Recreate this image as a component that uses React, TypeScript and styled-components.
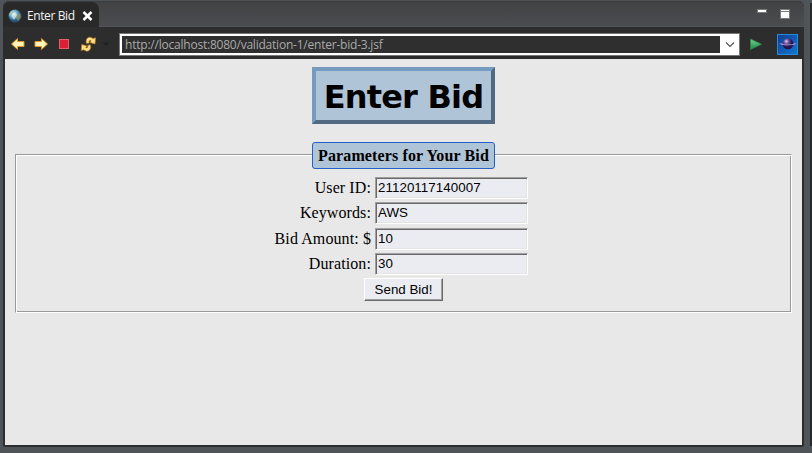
import React from "react";
import styled, { createGlobalStyle } from "styled-components";

const GlobalStyle = createGlobalStyle`
  * { box-sizing: border-box; }
  body { margin: 0; background: #4e5356; overflow: hidden; }
`;

const Desktop = styled.div`
  display: flex;
  justify-content: space-between;
  width: 812px;
  height: 453px;
  background: #4e5457;
`;

const Window = styled.div`
  display: flex;
  flex-direction: column;
  width: 801px;
  height: 446px;
  margin: 1px 0 0 3px;
  background: #2d2d2d;
  border-radius: 6px 6px 2px 2px;
`;

const Neighbour = styled.div`
  width: 2px;
  height: 443px;
  margin-top: 3px;
  background: #292929;
`;

const TabBar = styled.div`
  display: flex;
  justify-content: space-between;
  height: 26px;
  flex: none;
  background: linear-gradient(#424345, #4b4c4f);
  border-top: 1px solid #393b3c;
  border-bottom: 1px solid #515356;
  border-radius: 6px 6px 0 0;
`;

const Tab = styled.div`
  display: flex;
  align-items: center;
  width: 96px;
  height: 26px;
  padding: 1px 0 0 5px;
  background: #292929;
  border-radius: 6px 7px 0 0;
  color: #f4f4f4;
  font: 12px "Open Sans", sans-serif;
`;

const TabTitle = styled.span`
  width: 48px;
  margin: 0 7px 0 5px;
  line-height: 16px;
  letter-spacing: -0.4px;
  white-space: nowrap;
`;

const WindowButtons = styled.div`
  display: flex;
  gap: 13px;
  padding: 7px 14px 0 0;
`;

const Toolbar = styled.div`
  display: flex;
  align-items: center;
  height: 32px;
  flex: none;
  padding: 2px 6px 0 7px;
  background: #2d2d2d;
`;

const ToolIcons = styled.div`
  display: flex;
  align-items: center;
  width: 109px;
`;

const AddressBox = styled.div`
  display: flex;
  flex: none;
  width: 621px;
  height: 23px;
  padding: 2px;
  border: 1px solid #777;
  background: #fff;
`;

const Address = styled.div`
  width: 598px;
  padding-left: 3px;
  background: #2f2f2f;
  color: #aaa;
  font: 12px/17px "Open Sans", sans-serif;
  letter-spacing: -0.22px;
  white-space: nowrap;
`;

const DropArrow = styled.svg`
  margin: 5px 0 0 5px;
`;

const Page = styled.main`
  display: flex;
  flex-direction: column;
  align-items: center;
  height: 386px;
  margin: 0 2px;
  padding: 8px 10px 0;
  background: #e8e8e8;
  color: #000;
  font: 16px "Liberation Serif", serif;
`;

const Heading = styled.h1`
  width: 183px;
  height: 57px;
  margin: 0;
  border: 4px solid;
  border-color: #759bbe #516982 #516982 #759bbe;
  background: #b0c4d8;
  font: bold 32px/53px "DejaVu Sans", sans-serif;
  letter-spacing: -0.8px;
  text-align: center;
  white-space: nowrap;
`;

const Group = styled.section`
  display: flex;
  flex-direction: column;
  align-items: center;
  width: 777px;
  height: 159px;
  margin-top: 30px;
  border: 1px solid;
  border-color: #999 #fff #fff #999;
  box-shadow: inset 1px 1px #fff, inset -1px -1px #999;
`;

const Legend = styled.h2`
  width: 183px;
  height: 27px;
  margin: -13px 0 8px;
  border: 1px solid #2560c8;
  border-radius: 3px;
  background: #b0c4d8;
  font: bold 16px/26px "Liberation Serif", serif;
  letter-spacing: 0.12px;
  text-align: center;
  white-space: nowrap;
`;

const Form = styled.form`
  display: grid;
  grid-template-columns: 97px 153px;
  grid-auto-rows: 22px;
  column-gap: 4px;
  row-gap: 3.3px;
  margin-right: 5px;
`;

const Label = styled.label`
  line-height: 22px;
  letter-spacing: 0.1px;
  text-align: right;
  white-space: nowrap;
`;

const Input = styled.input`
  width: 153px;
  height: 22px;
  margin: 0;
  padding: 1px 1px 2px 2px;
  border: 1px solid;
  border-color: #a0a0a0 #fff #fff #a0a0a0;
  border-radius: 0;
  box-shadow: inset 1px 1px #696969, inset -1px -1px #e3e3e3;
  outline: none;
  background: #ebecf2;
  color: #000;
  font: 13.33px "Liberation Sans", sans-serif;
  letter-spacing: 0.06px;
`;

const SubmitButton = styled.button`
  width: 79px;
  height: 23px;
  margin-top: 3px;
  padding: 0;
  border: 1px solid;
  border-color: #fff #696969 #696969 #fff;
  border-radius: 0;
  box-shadow: inset -1px -1px #a0a0a0;
  background: #ebecf2;
  color: #000;
  font: 13.33px "Liberation Sans", sans-serif;
`;

const arrow = "M1 6.5 7 1V4H13.5V9H7V12Z";
const refreshHalf = "M76.6 8.6C75.2 5 77.2 2 80.2 2.2L83.2 3.6 85.6 2.8 85 9 79.8 7.4 81.2 5.8C79.6 5 78.6 5.9 79.2 8Z";

const fields = [
  { id: "user", label: "User ID:", value: "21120117140007" },
  { id: "keywords", label: "Keywords:", value: "AWS" },
  { id: "amount", label: "Bid Amount: $", value: "10" },
  { id: "duration", label: "Duration:", value: "30" },
];

const Globe = () => (
  <svg width="14" height="14" viewBox="0 0 14 14">
    <defs>
      <radialGradient id="globe" cx="40%" cy="35%">
        <stop stopColor="#dcf4f4" />
        <stop offset=".6" stopColor="#6ba6c6" />
        <stop offset="1" stopColor="#28547a" />
      </radialGradient>
    </defs>
    <circle cx="7" cy="7" r="6.5" fill="url(#globe)" />
    <path d="M2 3 4 1.5 7 2 5 5 3 7 1 6Z" fill="#a6c9bd" opacity=".6" />
    <path d="M9 6 12 4 13 8 10 12 8 9Z" fill="#91986b" opacity=".75" />
    <path d="M4 5 7 3 9 6 6 11 4 8Z" fill="#edf8ef" opacity=".5" />
  </svg>
);

export default function App() {
  return (
    <>
      <GlobalStyle />
      <Desktop>
        <Window>
          <TabBar>
            <Tab>
              <Globe />
              <TabTitle>Enter Bid</TabTitle>
              <svg width="11" height="10" viewBox="0 0 11 10">
                <path d="M1.5 1 9.5 9M9.5 1 1.5 9" stroke="#fff" strokeWidth="2.5" />
              </svg>
            </Tab>
            <WindowButtons>
              <svg width="10" height="4" viewBox="0 0 10 4">
                <path d="M.5 .5H9.5V3.5H.5Z" fill="#fff" stroke="#77797b" />
              </svg>
              <svg width="10" height="10" viewBox="0 0 10 10">
                <path d="M.5 .5H9.5V9.5H.5Z" fill="#fff" stroke="#77797b" />
                <path d="M1 2.5H9" stroke="#77797b" />
              </svg>
            </WindowButtons>
          </TabBar>
          <Toolbar>
            <ToolIcons>
              <svg width="109" height="18" viewBox="0 0 109 18">
                <g fill="#fff3b8" stroke="#d99a2b" strokeLinejoin="round">
                  <path d={arrow} transform="translate(0.5 2.5)" />
                  <path d={arrow} transform="translate(38.5 2.5) scale(-1 1)" />
                </g>
                <rect x="49.5" y="4.5" width="9" height="9" fill="#dc2038" stroke="#e0606c" />
                <g fill="#ffdf86" stroke="#b97922" strokeWidth=".7" strokeLinejoin="round">
                  <path d={refreshHalf} />
                  <path d={refreshHalf} transform="rotate(180 78.4 9.2)" />
                </g>
                <path d="M92.5 7.5H99.5L96 11Z" fill="#202020" />
              </svg>
            </ToolIcons>
            <AddressBox>
              <Address>http://localhost:8080/validation-1/enter-bid-3.jsf</Address>
              <DropArrow width="10" height="8" viewBox="0 0 10 8">
                <path d="M1 1.5 5 5.5 9 1.5" fill="none" stroke="#555" strokeWidth="1.2" />
              </DropArrow>
            </AddressBox>
            <svg width="58" height="22" viewBox="0 0 58 22">
              <defs>
                <linearGradient id="go" x2="0" y2="1">
                  <stop stopColor="#70d48d" />
                  <stop offset="1" stopColor="#218746" />
                </linearGradient>
                <linearGradient id="badge" x2="1" y2="1">
                  <stop stopColor="#103c91" />
                  <stop offset="1" stopColor="#127ad2" />
                </linearGradient>
                <radialGradient id="planet" cx="35%" cy="28%">
                  <stop stopColor="#e7c9f3" />
                  <stop offset=".45" stopColor="#684e9c" />
                  <stop offset="1" stopColor="#251452" />
                </radialGradient>
              </defs>
              <path d="M10.5 6 21.5 11.2 10.5 16.5Z" fill="url(#go)" stroke="#2c8c4c" strokeWidth=".7" />
              <rect x="37.5" y="1.5" width="20" height="20" fill="url(#badge)" stroke="#2888dc" />
              <path d="M39 10.8C42 9.8 54 9.8 57 10.8C54 12 42 12 39 10.8Z" fill="#a990d2" />
              <circle cx="48" cy="10.8" r="5.5" fill="url(#planet)" />
              <path d="M41 11.2C44 12 52 12 55 11.2" fill="none" stroke="#b49bd6" strokeWidth=".8" />
            </svg>
          </Toolbar>
          <Page>
            <Heading>Enter Bid</Heading>
            <Group>
              <Legend>Parameters for Your Bid</Legend>
              <Form>
                {fields.map((f) => (
                  <React.Fragment key={f.id}>
                    <Label htmlFor={f.id}>{f.label}</Label>
                    <Input id={f.id} defaultValue={f.value} />
                  </React.Fragment>
                ))}
              </Form>
              <SubmitButton type="button">Send Bid!</SubmitButton>
            </Group>
          </Page>
        </Window>
        <Neighbour />
      </Desktop>
    </>
  );
}
